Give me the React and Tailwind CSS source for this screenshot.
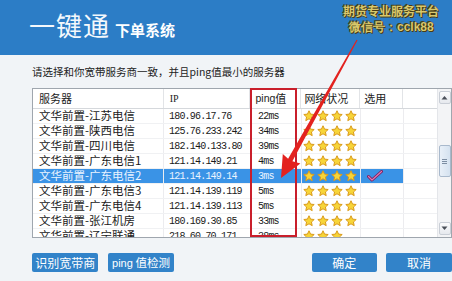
import React from "react";

const rows = [
  { name: "文华前置-江苏电信", ip: "180.96.17.76", ping: "22ms", stars: 4 },
  { name: "文华前置-陕西电信", ip: "125.76.233.242", ping: "34ms", stars: 4 },
  { name: "文华前置-四川电信", ip: "182.140.133.80", ping: "39ms", stars: 4 },
  { name: "文华前置-广东电信1", ip: "121.14.149.21", ping: "4ms", stars: 4 },
  { name: "文华前置-广东电信2", ip: "121.14.149.14", ping: "3ms", stars: 4, selected: true },
  { name: "文华前置-广东电信3", ip: "121.14.139.119", ping: "5ms", stars: 4 },
  { name: "文华前置-广东电信4", ip: "121.14.139.113", ping: "5ms", stars: 4 },
  { name: "文华前置-张江机房", ip: "180.169.30.85", ping: "33ms", stars: 4 },
  { name: "文华前置-辽宁联通", ip: "218.60.70.171", ping: "38ms", stars: 3 },
];

function Star() {
  return (
    <svg className="h-[12px] w-[12px] shrink-0" viewBox="0 0 24 24">
      <path
        d="M12 1.5l3.1 6.7 7.3.8-5.5 5 1.5 7.3L12 17.6l-6.4 3.7 1.5-7.3-5.5-5 7.3-.8z"
        fill="#f7d538"
        stroke="#d99a1c"
        strokeWidth="2"
        strokeLinejoin="round"
      />
    </svg>
  );
}

function Check() {
  return (
    <svg className="h-[12px] w-[16px]" viewBox="0 0 16 12" fill="none" strokeLinecap="round" strokeLinejoin="round">
      <path d="M1.5 6.5l3.5 3.5 9.5-8.5" stroke="#7a1f5c" strokeWidth="3" />
      <path d="M1.5 6.5l3.5 3.5 9.5-8.5" stroke="#e07ab8" strokeWidth="1.2" />
    </svg>
  );
}

function ScrollArrow({ up }) {
  return (
    <div className="h-[13px] w-[12px] mx-auto rounded-[2px] border border-[#c9ced6] bg-gradient-to-b from-[#fbfbfc] to-[#e6e9ee] flex items-center justify-center">
      <svg className="h-[5px] w-[7px]" viewBox="0 0 7 5">
        <path d={up ? "M0.5 4.5L3.5 1 6.5 4.5z" : "M0.5 0.5L3.5 4 6.5 0.5z"} fill="#4a4f58" />
      </svg>
    </div>
  );
}

export default function App() {
  const cjk = "font-['Noto_Sans_CJK_SC','Noto_Sans',sans-serif]";
  const mono = "font-['Liberation_Mono','DejaVu_Sans_Mono',monospace]";

  return (
    <div className={`relative h-[281px] w-[452px] overflow-hidden bg-[#f1f4f7] ${cjk}`}>
      {/* title bar */}
      <div className="h-[55px] bg-[#2c7dc6] flex items-end pl-[29px] pb-[17px] gap-[5px]">
        <span className="text-[26px] leading-[26px] text-[#f4f8fc] tracking-[1px]">一键通</span>
        <span className="text-[15px] leading-[15px] font-bold text-white pb-[1px]">下单系统</span>
      </div>

      <div className="pl-[32px] pt-[10px]">
        <div className="text-[10.5px] leading-[14px] text-[#222]">请选择和你宽带服务商一致，并且ping值最小的服务器</div>

        {/* server list */}
        <div className="mt-[9px] flex h-[150px] w-[420px] border border-[#9fa6ae] bg-white">
          <div className="w-[405px] overflow-hidden">
            <div className="flex h-[20px] border-b border-[#d5d8dc] text-[11px] text-[#222] items-stretch">
              <div className="w-[131px] pl-[6px] flex items-center border-r border-[#e2e4e7]">服务器</div>
              <div className="w-[87px] pl-[6px] flex items-center border-r border-[#e2e4e7] font-['Liberation_Serif',serif] text-[10px]">IP</div>
              <div className="w-[51px] pl-[5px] flex items-center border-r border-[#e2e4e7]">
                <span className="font-['Liberation_Sans',sans-serif] text-[10.5px]">ping</span>值
              </div>
              <div className="w-[59px] pl-[3px] flex items-center border-r border-[#e2e4e7]">网络状况</div>
              <div className="w-[43px] pl-[4px] flex items-center border-r border-[#e2e4e7]">选用</div>
              <div className="w-[34px]" />
            </div>
            {rows.map((r) => (
              <div key={r.name} className="flex h-[15px] items-stretch border-b border-[#f0f1f3]">
                <div
                  className={`flex w-[371px] items-stretch ${
                    r.selected ? "bg-[#3a93e6] text-[#eaf4ff]" : "text-[#1a1a1a]"
                  }`}
                >
                  <div className="w-[131px] pl-[6px] flex items-center text-[11.5px] leading-none border-r border-[#ececef]">{r.name}</div>
                  <div className={`w-[87px] pl-[5px] flex items-center text-[10px] tracking-[-0.8px] border-r border-[#ececef] ${mono}`}>{r.ip}</div>
                  <div className={`w-[51px] pl-[7px] flex items-center text-[10px] tracking-[-0.8px] border-r border-[#ececef] ${mono}`}>{r.ping}</div>
                  <div className="w-[59px] pl-[1px] flex items-center gap-[2px] border-r border-[#ececef]">
                    {Array.from({ length: r.stars }).map((_, i) => (
                      <Star key={i} />
                    ))}
                  </div>
                  <div className="w-[43px] pl-[6px] flex items-center border-r border-[#ececef]">{r.selected && <Check />}</div>
                </div>
                <div className="w-[34px]" />
              </div>
            ))}
          </div>
          {/* scrollbar */}
          <div className="w-[14px] ml-auto bg-[#f3f4f6] border-l border-[#e4e6ea] flex flex-col py-[2px]">
            <ScrollArrow up />
            <div className="mt-[41px] h-[32px] w-[12px] mx-auto rounded-[2px] border border-[#a9b9cc] bg-gradient-to-r from-[#e9f0f8] to-[#d5e2f0] flex flex-col items-center justify-center gap-[1px]">
              <div className="h-px w-[5px] bg-[#7d8ea3]" />
              <div className="h-px w-[5px] bg-[#7d8ea3]" />
              <div className="h-px w-[5px] bg-[#7d8ea3]" />
            </div>
            <div className="mt-auto">
              <ScrollArrow />
            </div>
          </div>
        </div>

        {/* buttons */}
        <div className="mt-[15px] flex items-center text-[12px] text-white">
          <button className="h-[19px] w-[67px] rounded-[2px] bg-[#3283c9]">识别宽带商</button>
          <button className="ml-[10px] h-[19px] w-[66px] rounded-[2px] bg-[#3283c9] text-[11.5px]">
            <span className="font-['Liberation_Sans',sans-serif] text-[11px]">ping</span> 值检测
          </button>
          <button className="ml-[138px] h-[19px] w-[66px] rounded-[2px] bg-[#3283c9]">确定</button>
          <button className="ml-[9px] h-[19px] w-[66px] rounded-[2px] bg-[#3283c9] shrink-0">取消</button>
        </div>
      </div>

      {/* red annotation box over ping column */}
      <div className="absolute left-[250px] top-[88px] h-[149px] w-[47px] border-[2.5px] border-[#c91f2b]" />

      {/* red annotation arrow */}
      <svg className="absolute left-0 top-0 h-[281px] w-[452px] pointer-events-none" viewBox="0 0 452 281">
        <polygon
          points="357.5,40.2 292.4,161.2 300.4,163.5 281,178 282.8,153.9 288.1,158.8 356.5,39.8"
          fill="#e3221f"
        />
      </svg>

      {/* watermark */}
      <div className="absolute left-[343px] top-[3px] text-[12px] leading-[16px] font-bold text-[#d9c86c] [text-shadow:0_0_1px_#3b3212,1px_1px_0_#4a3f16,-1px_-1px_0_#4a3f16]">
        <div className="relative whitespace-nowrap">期货专业服务平台</div>
        <div className="relative whitespace-nowrap pl-[6px] font-['Liberation_Sans',sans-serif]">微信号：cclk88</div>
      </div>
    </div>
  );
}
